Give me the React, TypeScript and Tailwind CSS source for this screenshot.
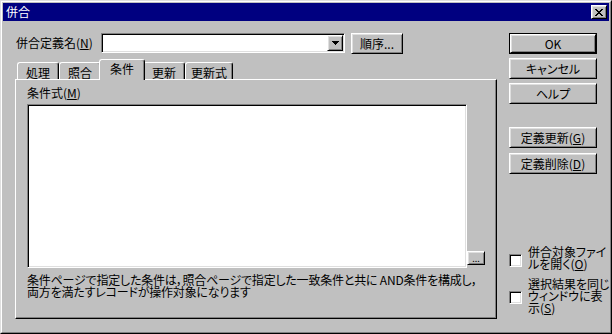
import React from "react";

const raised =
  "border border-t-white border-l-white border-r-black border-b-black shadow-[inset_1px_1px_#dfdfdf,inset_-1px_-1px_#808080] bg-[#c0c0c0]";
const sunken =
  "border border-t-[#808080] border-l-[#808080] border-r-white border-b-white shadow-[inset_1px_1px_#000,inset_-1px_-1px_#dfdfdf] bg-white";

function U({ c }: { c: string }) {
  return <span className="underline underline-offset-[1px] decoration-1">{c}</span>;
}

const X_ROWS = ["11000011", "01100110", "00111100", "00011000", "00111100", "01100110", "11000011"];

function CloseX() {
  return (
    <svg width="8" height="7" viewBox="0 0 8 7" shapeRendering="crispEdges">
      {X_ROWS.flatMap((r, y) =>
        r.split("").map((v, x) => (v === "1" ? <rect key={`${x}-${y}`} x={x} y={y} width="1" height="1" fill="#000" /> : null))
      )}
    </svg>
  );
}

function Btn({ children, className = "" }: { children: React.ReactNode; className?: string }) {
  return <div className={`flex items-center justify-center ${raised} ${className}`}>{children}</div>;
}

function Tab({ children, w, sel = false }: { children: React.ReactNode; w: string; sel?: boolean }) {
  if (sel) {
    return (
      <div
        className={`relative z-10 -mx-[2px] mb-[-1px] flex h-[21px] ${w} items-start justify-center rounded-t-[3px] border-t border-l border-r border-t-white border-l-white border-r-black bg-[#c0c0c0] pt-[3px] shadow-[inset_-1px_0_#808080]`}
      >
        {children}
      </div>
    );
  }
  return (
    <div
      className={`flex h-[17px] ${w} items-start justify-center rounded-t-[3px] border-t border-l border-r border-t-white border-l-white border-r-black pt-[4px] shadow-[inset_-1px_0_#808080]`}
    >
      {children}
    </div>
  );
}

function Check() {
  return <div className={`h-[13px] w-[13px] shrink-0 ${sunken}`} />;
}

export default function App() {
  return (
    <div className="h-[334px] w-[612px] border border-t-[#dfdfdf] border-l-[#dfdfdf] border-r-black border-b-black bg-[#c0c0c0] font-['Noto_Sans_CJK_JP',sans-serif] text-[12px] leading-[12px] text-black [font-feature-settings:'palt']">
      <div className="flex h-full w-full flex-col border border-t-white border-l-white border-r-[#808080] border-b-[#808080] p-px">
        {/* title bar */}
        <div className="flex h-[18px] shrink-0 items-center justify-between bg-[#000080] pl-[3px] pr-[2px]">
          <span className="text-white">併合</span>
          <div className={`flex h-[14px] w-[16px] items-center justify-center ${raised}`}>
            <CloseX />
          </div>
        </div>

        {/* body */}
        <div className="flex flex-1 pl-[12px] pt-[12px]">
          {/* left column */}
          <div className="flex w-[482px] flex-col">
            <div className="flex h-[21px] items-start">
              <div className="flex h-[20px] w-[86px] items-center pl-px">
                併合定義名(<U c="N" />)
              </div>
              <div className={`flex h-[20px] w-[244px] justify-end p-px ${sunken}`}>
                <div className={`flex h-[16px] w-[16px] items-center justify-center ${raised}`}>
                  <svg width="7" height="4" viewBox="0 0 7 4" shapeRendering="crispEdges">
                    <path d="M0 0h7v1h-1v1h-1v1h-1v1h-1v-1h-1v-1h-1v-1h-1z" fill="#000" />
                  </svg>
                </div>
              </div>
              <Btn className="ml-[6px] h-[21px] w-[52px]">順序...</Btn>
            </div>

            {/* tabs */}
            <div className="mt-[6px] flex h-[19px] items-end pl-[2px]">
              <Tab w="w-[42px]">処理</Tab>
              <Tab w="w-[42px]">照合</Tab>
              <Tab w="w-[46px]" sel>
                条件
              </Tab>
              <Tab w="w-[42px]">更新</Tab>
              <Tab w="w-[48px]">更新式</Tab>
            </div>
            <div className="flex h-[240px] w-[482px] flex-col border border-t-white border-l-white border-r-black border-b-black pl-[11px] pt-[6px] shadow-[inset_-1px_-1px_#808080]">
              <div className="leading-[14px]">
                条件式(<U c="M" />)
              </div>
              <div className="mt-[4px] flex items-end">
                <div className={`h-[164px] w-[440px] ${sunken}`} />
                <Btn className="mb-[3px] h-[14px] w-[18px] text-[9px] leading-[9px]">...</Btn>
              </div>
              <div className="mt-[6px] whitespace-nowrap tracking-[-0.2px]">
                条件ページで指定した条件は，照合ページで指定した一致条件と共に AND条件を構成し，
                <br />
                両方を満たすレコードが操作対象になります
              </div>
            </div>
          </div>

          {/* right column */}
          <div className="ml-[12px] flex w-[88px] flex-col">
            <div className="h-[21px] border border-black">
              <Btn className="h-full w-full">OK</Btn>
            </div>
            <Btn className="mt-[4px] h-[21px]">キャンセル</Btn>
            <Btn className="mt-[4px] h-[21px]">ヘルプ</Btn>
            <Btn className="mt-[23px] h-[21px]">
              定義更新(<U c="G" />)
            </Btn>
            <Btn className="mt-[5px] h-[21px]">
              定義削除(<U c="D" />)
            </Btn>

            <div className="mt-[72px] flex items-center">
              <div className="mt-[4px]">
                <Check />
              </div>
              <div className="ml-[6px] whitespace-nowrap">
                併合対象ファイ
                <br />
                ルを開く(<U c="O" />)
              </div>
            </div>
            <div className="mt-[8px] flex items-center">
              <div className="mt-[3px]">
                <Check />
              </div>
              <div className="ml-[6px] whitespace-nowrap">
                選択結果を同じ
                <br />
                ウィンドウに表
                <br />
                示(<U c="S" />)
              </div>
            </div>
          </div>
        </div>
      </div>
    </div>
  );
}
